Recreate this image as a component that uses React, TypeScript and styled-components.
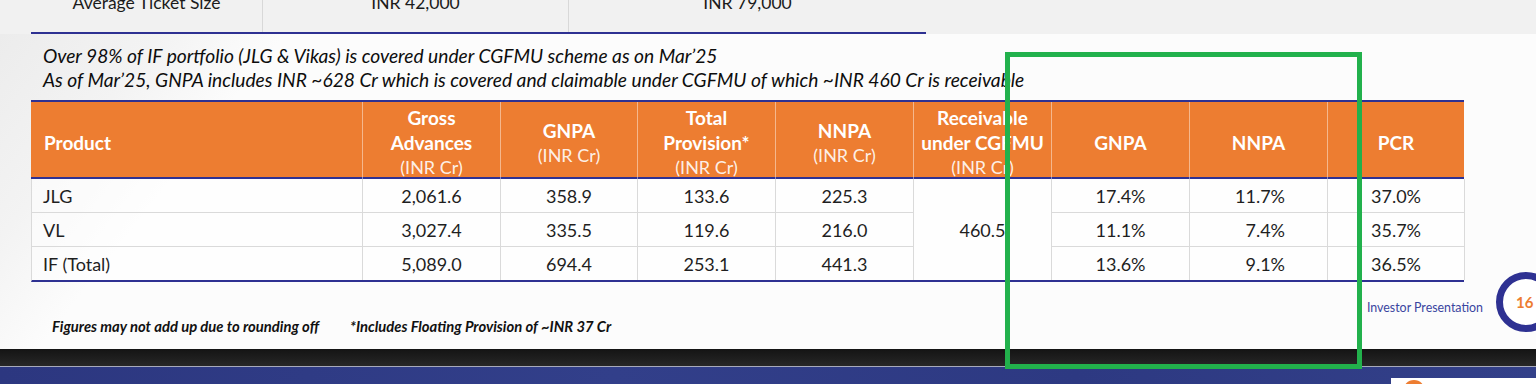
import React from "react";
import styled, { createGlobalStyle } from "styled-components";

const BLUE = "#2e3192";
const ORANGE = "#ed7d31";
const GRID = "#dadada";
const COLS = "331px 138px 137px 138px 138px 138px 138px 138px 137px";

type Row = {
  product: string;
  gross: string;
  gnpa: string;
  provision: string;
  nnpa: string;
  gnpaPct: string;
  nnpaPct: string;
  pcr: string;
};

const rows: Row[] = [
  { product: "JLG", gross: "2,061.6", gnpa: "358.9", provision: "133.6", nnpa: "225.3", gnpaPct: "17.4%", nnpaPct: "11.7%", pcr: "37.0%" },
  { product: "VL", gross: "3,027.4", gnpa: "335.5", provision: "119.6", nnpa: "216.0", gnpaPct: "11.1%", nnpaPct: "7.4%", pcr: "35.7%" },
  { product: "IF (Total)", gross: "5,089.0", gnpa: "694.4", provision: "253.1", nnpa: "441.3", gnpaPct: "13.6%", nnpaPct: "9.1%", pcr: "36.5%" },
];

const headers: { lines: string[]; sub?: boolean }[] = [
  { lines: ["Gross", "Advances"], sub: true },
  { lines: ["GNPA"], sub: true },
  { lines: ["Total", "Provision*"], sub: true },
  { lines: ["NNPA"], sub: true },
  { lines: ["Receivable", "under CGFMU"], sub: true },
  { lines: ["GNPA"] },
  { lines: ["NNPA"] },
  { lines: ["PCR"] },
];

const App: React.FC = () => {
  return (
    <>
      <GlobalStyle />
      <Page>
        {/* tail of the previous table */}
        <TopBand>
          <TopTable>
            <TopCell>
              <TopText>Average Ticket Size</TopText>
            </TopCell>
            <TopCell $divider>
              <TopText>INR 42,000</TopText>
            </TopCell>
            <TopCell $divider>
              <TopText>INR 79,000</TopText>
            </TopCell>
          </TopTable>
        </TopBand>

        <Slide>
          <Notes>
            <div>Over 98% of IF portfolio (JLG &amp; Vikas) is covered under CGFMU scheme as on Mar’25</div>
            <div>As of Mar’25, GNPA includes INR ~628 Cr which is covered and claimable under CGFMU of which ~INR 460 Cr is receivable</div>
          </Notes>

          <DataTable>
            <HeadRow>
              <HeadCell $left>
                <HeadLine>Product</HeadLine>
              </HeadCell>
              {headers.map((h, i) => (
                <HeadCell key={i} $divider>
                  {h.lines.map((l) => (
                    <HeadLine key={l}>{l}</HeadLine>
                  ))}
                  {h.sub && <HeadSub>(INR Cr)</HeadSub>}
                </HeadCell>
              ))}
            </HeadRow>
            <BodyGrid>
              {rows.map((r, i) => {
                const last = i === rows.length - 1;
                return (
                  <React.Fragment key={r.product}>
                    <Cell $last={last} $left>{r.product}</Cell>
                    <Cell $last={last}>{r.gross}</Cell>
                    <Cell $last={last}>{r.gnpa}</Cell>
                    <Cell $last={last}>{r.provision}</Cell>
                    <Cell $last={last}>{r.nnpa}</Cell>
                    {i === 0 && <MergedCell>460.5</MergedCell>}
                    <Cell $last={last}>{r.gnpaPct}</Cell>
                    <Cell $last={last} $right>{r.nnpaPct}</Cell>
                    <Cell $last={last}>{r.pcr}</Cell>
                  </React.Fragment>
                );
              })}
            </BodyGrid>
          </DataTable>

          <Footer>
            <FootNotes>
              <span>Figures may not add up due to rounding off</span>
              <span>*Includes Floating Provision of ~INR 37 Cr</span>
            </FootNotes>
            <Brand>
              <BrandLabel>Investor Presentation</BrandLabel>
              <PageBadge>16</PageBadge>
            </Brand>
          </Footer>
        </Slide>

        <DarkBand />
        <NavyBand>
          <WhiteTab>
            <OrangeDot />
          </WhiteTab>
        </NavyBand>

        <Highlight />
      </Page>
    </>
  );
};

export default App;

const GlobalStyle = createGlobalStyle`
  html, body {
    margin: 0;
    padding: 0;
    background: #ffffff;
  }
`;

const Page = styled.div`
  position: relative;
  width: 1536px;
  height: 384px;
  overflow: hidden;
  display: flex;
  flex-direction: column;
  font-family: Lato, "Liberation Sans", sans-serif;
  color: #1b1b1b;
`;

const TopBand = styled.div`
  flex: none;
  height: 34px;
  padding-left: 31px;
  background: #f1f1f1;
  box-sizing: border-box;
`;

const TopTable = styled.div`
  width: 895px;
  height: 34px;
  display: grid;
  grid-template-columns: 231px 306px 358px;
  border-bottom: 2px solid ${BLUE};
  box-sizing: border-box;
`;

const TopCell = styled.div<{ $divider?: boolean }>`
  overflow: hidden;
  text-align: center;
  border-left: ${(p) => (p.$divider ? "1px solid #d8d8d8" : "none")};
`;

// only the lower half of this row is still on screen
const TopText = styled.div`
  margin-top: -7px;
  font-size: 17.5px;
  line-height: 20px;
`;

const Slide = styled.div`
  flex: none;
  height: 315px;
  display: flex;
  flex-direction: column;
  padding-top: 10px;
  box-sizing: border-box;
  background: linear-gradient(128deg, #ececec 0%, #f3f3f3 9%, #fcfcfc 16%, #fcfcfc 100%);
`;

const Notes = styled.div`
  padding-left: 43px;
  font-size: 19.2px;
  line-height: 24px;
  font-style: italic;
  color: #0d0d0d;
`;

const DataTable = styled.div`
  width: 1433px;
  margin: 8px 0 0 31px;
`;

const HeadRow = styled.div`
  display: grid;
  grid-template-columns: ${COLS};
  height: 79px;
  background: ${ORANGE};
  border-top: 2px solid ${BLUE};
  border-bottom: 2px solid ${BLUE};
  box-sizing: border-box;
`;

const HeadCell = styled.div<{ $left?: boolean; $divider?: boolean }>`
  display: flex;
  flex-direction: column;
  justify-content: center;
  align-items: ${(p) => (p.$left ? "flex-start" : "center")};
  padding: 3px 0 0 ${(p) => (p.$left ? "13px" : "0")};
  border-left: ${(p) => (p.$divider ? "1px solid rgba(255, 255, 255, 0.45)" : "none")};
  color: #ffffff;
  text-align: center;
`;

const HeadLine = styled.div`
  font-size: 19px;
  font-weight: 700;
  line-height: 25px;
  white-space: nowrap;
`;

const HeadSub = styled.div`
  font-size: 18px;
  font-weight: 400;
  line-height: 24px;
  color: rgba(255, 255, 255, 0.9);
`;

const BodyGrid = styled.div`
  display: grid;
  grid-template-columns: ${COLS};
  grid-template-rows: 34px 34px 33px;
  border-left: 1px solid ${GRID};
  border-bottom: 2px solid ${BLUE};
  background: rgba(255, 255, 255, 0.55);
`;

const Cell = styled.div<{ $last?: boolean; $left?: boolean; $right?: boolean }>`
  display: flex;
  align-items: center;
  justify-content: ${(p) => (p.$left ? "flex-start" : p.$right ? "flex-end" : "center")};
  padding: 0 ${(p) => (p.$right ? "42px" : "0")} 0 ${(p) => (p.$left ? "11px" : "0")};
  border-right: 1px solid ${GRID};
  border-bottom: ${(p) => (p.$last ? "none" : `1px solid ${GRID}`)};
  font-size: 18px;
  color: #1f1f1f;
`;

const MergedCell = styled(Cell)`
  grid-row: span 3;
  border-bottom: none;
`;

const Footer = styled.div`
  flex: 1;
  display: flex;
  justify-content: space-between;
  align-items: flex-start;
`;

const FootNotes = styled.div`
  display: flex;
  gap: 31px;
  padding: 35px 0 0 52px;
  font-size: 14.8px;
  line-height: 18px;
  font-weight: 700;
  font-style: italic;
  color: #111111;
`;

const Brand = styled.div`
  display: flex;
  align-items: center;
  gap: 13px;
  margin: -10px -20px 0 0;
`;

const BrandLabel = styled.div`
  margin-top: 12px;
  font-size: 12.4px;
  line-height: 16px;
  color: #3a45a0;
`;

const PageBadge = styled.div`
  width: 60px;
  height: 60px;
  box-sizing: border-box;
  border: 7px solid ${BLUE};
  border-radius: 50%;
  background: #ffffff;
  display: flex;
  align-items: center;
  padding-left: 13px;
  font-size: 15px;
  font-weight: 700;
  color: ${ORANGE};
`;

const DarkBand = styled.div`
  flex: none;
  height: 17px;
  background: linear-gradient(180deg, #141414 0%, #272727 100%);
  border-bottom: 1px solid #a7aabb;
`;

const NavyBand = styled.div`
  flex: 1;
  display: flex;
  align-items: flex-end;
  background: linear-gradient(90deg, #2c3780 0%, #323f8a 40%, #2d3982 70%, #334089 100%);
`;

const WhiteTab = styled.div`
  width: 145px;
  height: 6px;
  margin-left: 1391px;
  padding: 2px 0 0 12px;
  box-sizing: border-box;
  overflow: hidden;
  background: #ffffff;
`;

const OrangeDot = styled.div`
  width: 22px;
  height: 22px;
  border-radius: 50%;
  background: ${ORANGE};
`;

// green annotation frame drawn over the slide
const Highlight = styled.div`
  position: absolute;
  left: 1005px;
  top: 52px;
  width: 357px;
  height: 317px;
  box-sizing: border-box;
  border: 5px solid #22b14c;
  pointer-events: none;
`;
